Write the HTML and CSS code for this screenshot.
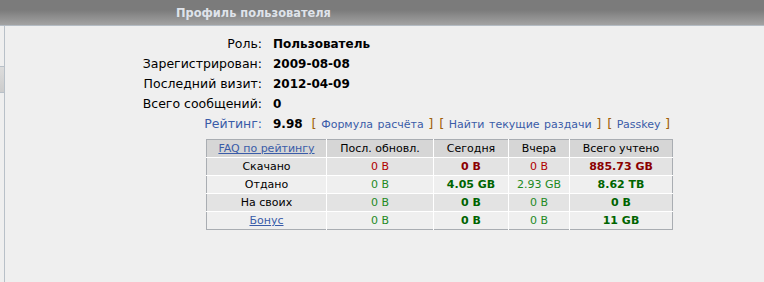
FILE: index.html
```html
<!DOCTYPE html>
<html>
<head>
<meta charset="utf-8">
<link rel="stylesheet" href="styles.css">
</head>
<body>
<div class="header"><span class="header-title">Профиль пользователя</span></div>
<div class="page">
  <div class="side"><div class="side-tab"></div></div>
  <div class="content">
    <div class="info">
      <div class="lbl">Роль:</div><div class="val">Пользователь</div>
      <div class="lbl">Зарегистрирован:</div><div class="val">2009-08-08</div>
      <div class="lbl">Последний визит:</div><div class="val">2012-04-09</div>
      <div class="lbl">Всего сообщений:</div><div class="val">0</div>
      <div class="lbl blue">Рейтинг:</div>
      <div class="val rating"><span>9.98</span>
        <span class="grp"><span class="br">[</span> <a>Формула расчёта</a> <span class="br">]</span></span>
        <span class="grp"><span class="br">[</span> <a>Найти текущие раздачи</a> <span class="br">]</span></span>
        <span class="grp"><span class="br">[</span> <a>Passkey</a> <span class="br">]</span></span>
      </div>
    </div>
    <table class="stats">
      <tr class="head">
        <td class="c1"><a class="u">FAQ по рейтингу</a></td>
        <td class="c2">Посл. обновл.</td>
        <td class="c3">Сегодня</td>
        <td class="c4">Вчера</td>
        <td class="c5">Всего учтено</td>
      </tr>
      <tr class="dark">
        <td>Скачано</td>
        <td class="red">0 B</td>
        <td class="red b">0 B</td>
        <td class="red">0 B</td>
        <td class="red b">885.73 GB</td>
      </tr>
      <tr class="light">
        <td>Отдано</td>
        <td class="green">0 B</td>
        <td class="green b">4.05 GB</td>
        <td class="green">2.93 GB</td>
        <td class="green b">8.62 TB</td>
      </tr>
      <tr class="dark">
        <td>На своих</td>
        <td class="green">0 B</td>
        <td class="green b">0 B</td>
        <td class="green">0 B</td>
        <td class="green b">0 B</td>
      </tr>
      <tr class="light">
        <td><a class="u">Бонус</a></td>
        <td class="green">0 B</td>
        <td class="green b">0 B</td>
        <td class="green">0 B</td>
        <td class="green b">11 GB</td>
      </tr>
    </table>
  </div>
</div>
</body>
</html>
```
FILE: styles.css
```css
html, body {
  margin: 0;
  padding: 0;
  background: #efefef;
  font-family: "DejaVu Sans", Verdana, sans-serif;
  font-size: 12.5px;
  color: #000;
}
.header {
  height: 25px;
  background: linear-gradient(#7b7b7b 0, #7b7b7b 10px, #a3a3a3 25px);
  border-bottom: 1px solid #b4bcc4;
  display: flex;
  align-items: center;
  padding-left: 176px;
}
.header-title {
  font-weight: bold;
  font-size: 11.4px;
  color: #dfe3ea;
}
.page {
  display: flex;
  min-height: 256px;
}
.side {
  width: 4px;
  border-right: 1px solid #b8c0c8;
  padding-top: 40px;
}
.side-tab {
  height: 25px;
  background: linear-gradient(#dcdcdc, #cccccc);
  border-top: 1px solid #b8c0c8;
  border-bottom: 1px solid #b8c0c8;
}
.content {
  padding-top: 8px;
  padding-left: 201px;
}
.info {
  display: grid;
  grid-template-columns: 160px auto;
  column-gap: 11px;
  grid-auto-rows: 20px;
  margin-left: -104px;
}
.lbl {
  text-align: right;
  line-height: 20px;
  white-space: nowrap;
}
.val {
  font-weight: bold;
  font-size: 12px;
  line-height: 20px;
  white-space: nowrap;
}
.blue { color: #3a5ca8; }
.rating { display: flex; align-items: baseline; }
.grp {
  font-weight: normal;
  font-size: 11px;
  margin-left: 9px;
  word-spacing: 1px;
}
.grp + .grp { margin-left: 6px; }
.grp a { color: #3a5ca8; }
.br { color: #a0600a; font-size: 13px; }
.stats {
  margin-top: 5px;
  border-collapse: collapse;
  border: 1px solid #a9adb2;
  width: 467px;
  text-align: center;
  font-size: 11px;
}
.stats td {
  border: 1px solid #ffffff;
  padding: 0;
  height: 17px;
  line-height: 17px;
}
.stats tr:first-child td { border-top: none; }
.stats tr td:first-child { border-left: none; }
.stats tr td:last-child { border-right: none; }
.stats tr:last-child td { border-bottom: none; }
.head td { background: #d6d6d6; }
.dark td { background: #e3e3e3; }
.light td { background: #efefef; }
.c1 { width: 119px; }
.c2 { width: 106px; }
.c3 { width: 74px; }
.c4 { width: 60px; }
.u { color: #3a5ca8; text-decoration: underline; }
.red { color: #b00000; }
.red.b { color: #8b0000; }
.green { color: #1f8a1f; }
.green.b { color: #006400; }
.b { font-weight: bold; }
```
